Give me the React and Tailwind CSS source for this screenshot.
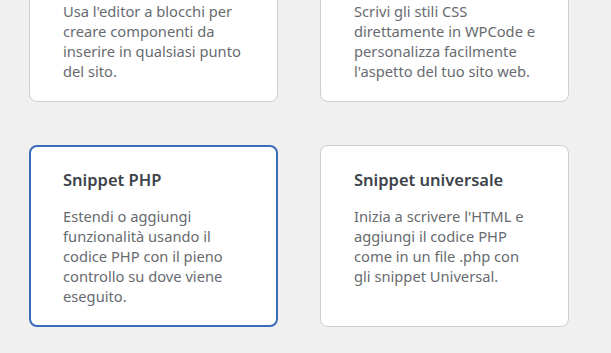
// top row is scrolled past its titles, only the descriptions show
const cards = [
  {
    text: "Usa l'editor a blocchi per creare componenti da inserire in qualsiasi punto del sito.",
  },
  {
    text: "Scrivi gli stili CSS direttamente in WPCode e personalizza facilmente l'aspetto del tuo sito web.",
  },
  {
    title: 'Snippet PHP',
    text: 'Estendi o aggiungi funzionalità usando il codice PHP con il pieno controllo su dove viene eseguito.',
    selected: true,
  },
  {
    title: 'Snippet universale',
    text: "Inizia a scrivere l'HTML e aggiungi il codice PHP come in un file .php con gli snippet Universal.",
  },
];

function Card({ title, text, selected }) {
  return (
    <div
      className={
        selected
          ? 'rounded-lg bg-white border-2 border-[#3a6cb8] pl-[32px] pr-6 pt-[21px] pb-[19px]'
          : 'rounded-lg bg-white border border-[#d0d0d2] pl-[33px] pr-7 pt-[22px] pb-[20px]'
      }
    >
      {title ? (
        <h3 className="text-[16.5px] leading-[24px] font-semibold text-[#3c434a] mb-[14px]">{title}</h3>
      ) : (
        <div className="h-[38px]" />
      )}
      <p className="text-[14.7px] leading-[20px] text-[#676b70] max-w-[184px]">{text}</p>
    </div>
  );
}

export default function App() {
  return (
    <div
      className="w-[611px] h-[353px] overflow-hidden bg-[#f0f0f1]"
      style={{ fontFamily: '"Noto Sans", "Open Sans", sans-serif' }}
    >
      <div className="mt-[-60px] ml-[29px] mr-[42px] grid grid-cols-2 gap-x-[42px] gap-y-[43px]">
        {cards.map((c, i) => (
          <Card key={i} {...c} />
        ))}
      </div>
    </div>
  );
}
